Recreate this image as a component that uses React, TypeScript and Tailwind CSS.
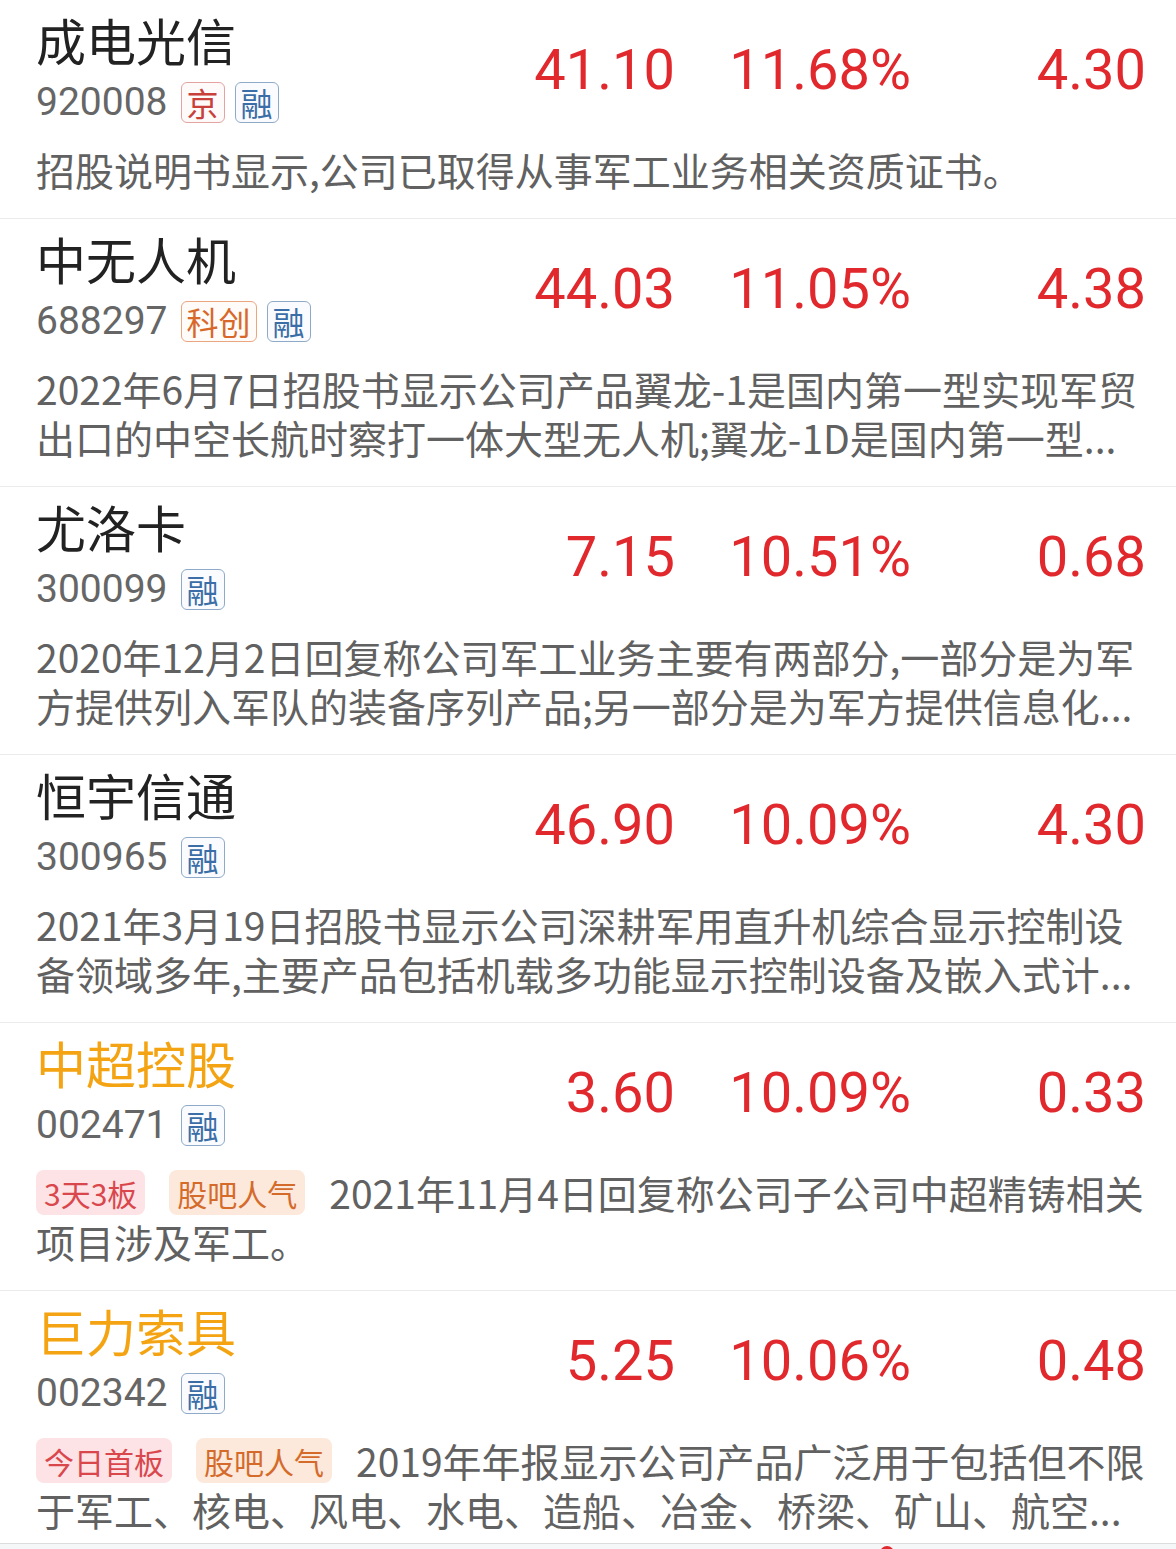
import React from "react";

type Badge = { text: string; kind: "jing" | "kc" | "rong" };
type Tag = { text: string; kind: "red" | "orange" };

type Stock = {
  name: string;
  hot?: boolean;
  code: string;
  badges: Badge[];
  price: string;
  pct: string;
  turnover: string;
  tags?: Tag[];
  lines: string[];
};

const stocks: Stock[] = [
  {
    name: "成电光信",
    code: "920008",
    badges: [
      { text: "京", kind: "jing" },
      { text: "融", kind: "rong" },
    ],
    price: "41.10",
    pct: "11.68%",
    turnover: "4.30",
    lines: ["招股说明书显示,公司已取得从事军工业务相关资质证书。"],
  },
  {
    name: "中无人机",
    code: "688297",
    badges: [
      { text: "科创", kind: "kc" },
      { text: "融", kind: "rong" },
    ],
    price: "44.03",
    pct: "11.05%",
    turnover: "4.38",
    lines: [
      "2022年6月7日招股书显示公司产品翼龙-1是国内第一型实现军贸",
      "出口的中空长航时察打一体大型无人机;翼龙-1D是国内第一型...",
    ],
  },
  {
    name: "尤洛卡",
    code: "300099",
    badges: [{ text: "融", kind: "rong" }],
    price: "7.15",
    pct: "10.51%",
    turnover: "0.68",
    lines: [
      "2020年12月2日回复称公司军工业务主要有两部分,一部分是为军",
      "方提供列入军队的装备序列产品;另一部分是为军方提供信息化...",
    ],
  },
  {
    name: "恒宇信通",
    code: "300965",
    badges: [{ text: "融", kind: "rong" }],
    price: "46.90",
    pct: "10.09%",
    turnover: "4.30",
    lines: [
      "2021年3月19日招股书显示公司深耕军用直升机综合显示控制设",
      "备领域多年,主要产品包括机载多功能显示控制设备及嵌入式计...",
    ],
  },
  {
    name: "中超控股",
    hot: true,
    code: "002471",
    badges: [{ text: "融", kind: "rong" }],
    price: "3.60",
    pct: "10.09%",
    turnover: "0.33",
    tags: [
      { text: "3天3板", kind: "red" },
      { text: "股吧人气", kind: "orange" },
    ],
    lines: ["2021年11月4日回复称公司子公司中超精铸相关", "项目涉及军工。"],
  },
  {
    name: "巨力索具",
    hot: true,
    code: "002342",
    badges: [{ text: "融", kind: "rong" }],
    price: "5.25",
    pct: "10.06%",
    turnover: "0.48",
    tags: [
      { text: "今日首板", kind: "red" },
      { text: "股吧人气", kind: "orange" },
    ],
    lines: [
      "2019年年报显示公司产品广泛用于包括但不限",
      "于军工、核电、风电、水电、造船、冶金、桥梁、矿山、航空...",
    ],
  },
];

const cjk = { fontFamily: '"Noto Sans CJK SC", "Noto Sans", sans-serif' };
const num = { fontFamily: 'Roboto, "Noto Sans CJK SC", sans-serif' };

function BadgeChip({ badge }: { badge: Badge }) {
  const tone =
    badge.kind === "jing"
      ? "border-[#e3a3a0] text-[#c8403a] bg-[#fffafa]"
      : badge.kind === "kc"
        ? "border-[#e9a67f] text-[#d8672a] bg-[#fffbf8]"
        : "border-[#8faac9] text-[#3b6da6] bg-[#f9fbfe]";
  return (
    <span
      className={`flex h-[41px] items-center rounded-[6px] border px-[5px] text-[32px] leading-none ${tone}`}
      style={cjk}
    >
      {badge.text}
    </span>
  );
}

function TagChip({ tag }: { tag: Tag }) {
  const tone =
    tag.kind === "red"
      ? "bg-[#fde3e5] text-[#d9474d]"
      : "bg-[#fde8dc] text-[#d46b2b]";
  return (
    <span
      className={`mr-[24px] inline-flex h-[45px] shrink-0 items-center rounded-[8px] px-[8px] text-[30px] leading-none ${tone}`}
    >
      {tag.text}
    </span>
  );
}

function StockRow({ stock }: { stock: Stock }) {
  return (
    <div className="border-b border-[#ebebeb] pb-[24px] pl-[36px] pr-[30px] pt-[9px]">
      <div className="flex items-center">
        <div className="min-w-0 flex-1">
          <div
            className={`text-[50px] leading-[60px] ${stock.hot ? "text-[#f4a413]" : "text-[#222222]"}`}
            style={cjk}
          >
            {stock.name}
          </div>
          <div className="mt-[5px] flex h-[56px] items-center gap-[10px]">
            <span className="mr-[3px] text-[39px] leading-none text-[#666666]" style={num}>
              {stock.code}
            </span>
            {stock.badges.map((b) => (
              <BadgeChip key={b.text} badge={b} />
            ))}
          </div>
        </div>
        <div className="w-[200px] text-right text-[56px] leading-none text-[#e0282d]" style={num}>
          {stock.price}
        </div>
        <div className="w-[236px] text-right text-[56px] leading-none text-[#e0282d]" style={num}>
          {stock.pct}
        </div>
        <div className="w-[235px] text-right text-[56px] leading-none text-[#e0282d]" style={num}>
          {stock.turnover}
        </div>
      </div>
      <div className="mt-[15px] text-[39px] leading-[49px] text-[#616161]" style={cjk}>
        {stock.lines.map((line, i) => (
          <div key={i} className="flex h-[49px] items-center whitespace-nowrap">
            {i === 0 && stock.tags?.map((t) => <TagChip key={t.text} tag={t} />)}
            <span>{line}</span>
          </div>
        ))}
      </div>
    </div>
  );
}

export default function App() {
  return (
    <div className="relative h-[1549px] w-[1176px] overflow-hidden bg-white" style={cjk}>
      {stocks.map((s) => (
        <StockRow key={s.code} stock={s} />
      ))}
      <div className="absolute left-0 right-0 top-[1543px] h-[20px] border-t border-[#dcdcdc] bg-[#f5f6f8]">
        <div className="absolute left-[880px] top-[2px] h-[14px] w-[14px] rounded-full bg-[#e0282d]" />
      </div>
    </div>
  );
}
